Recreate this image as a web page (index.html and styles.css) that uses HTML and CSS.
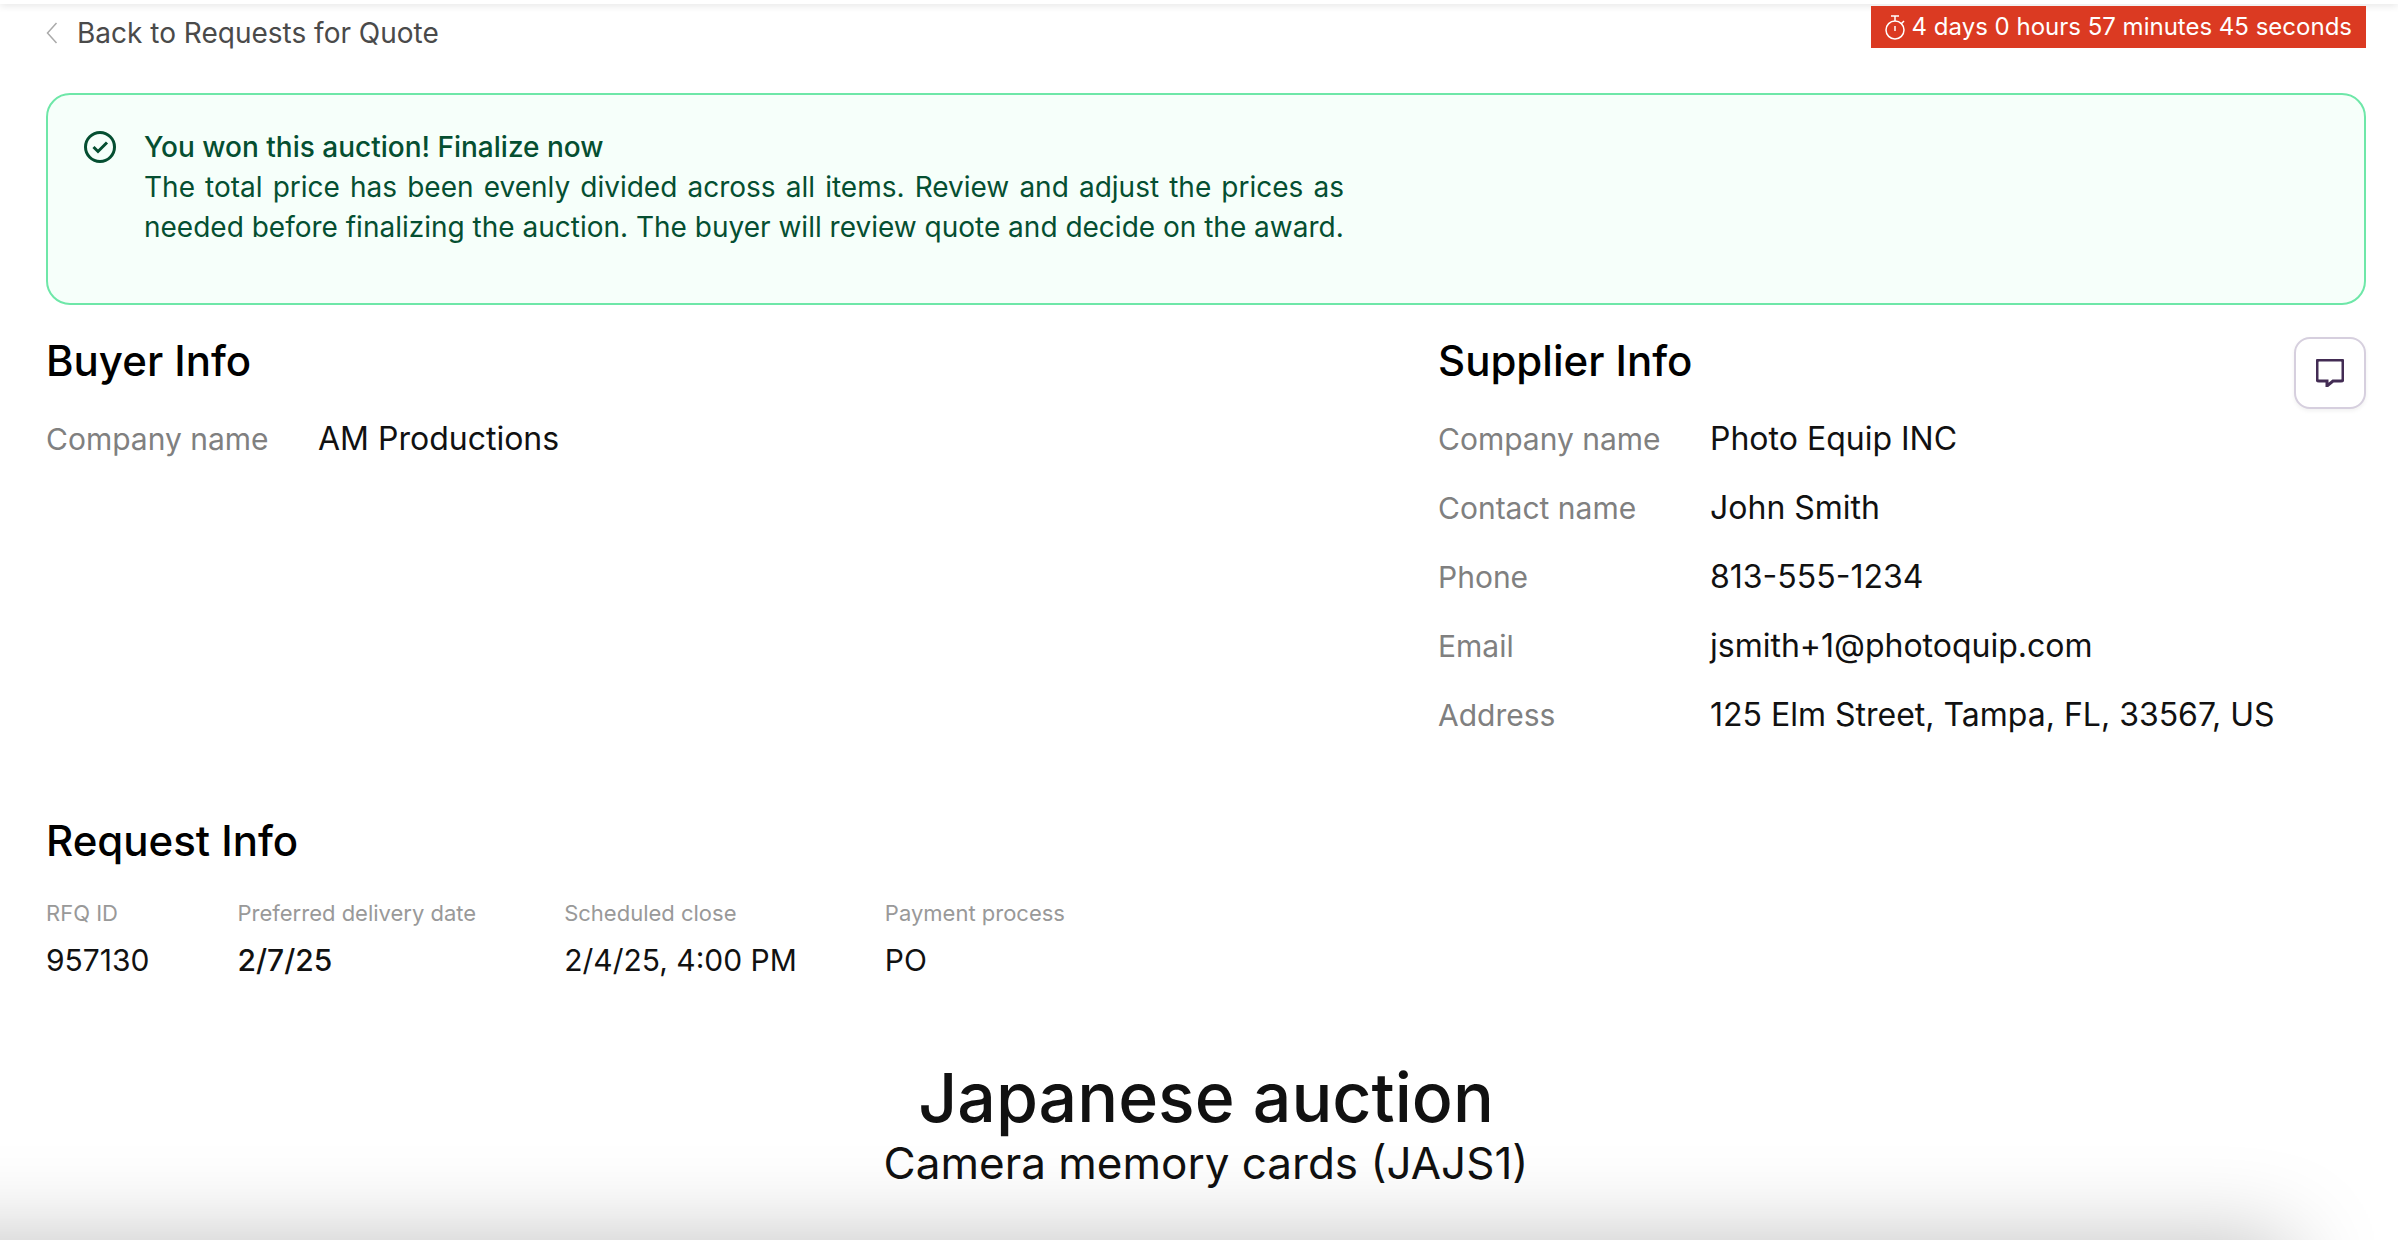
FILE: index.html
```
<!DOCTYPE html>
<html lang="en">
<head>
<meta charset="utf-8">
<meta name="viewport" content="width=device-width, initial-scale=1">
<title>Request for Quote</title>
<link rel="stylesheet" href="styles.css">
</head>
<body>
<header class="topbar"></header>
<main class="page">
  <div class="page-head">
    <a class="back" href="#">
      <svg class="back-icon" viewBox="0 0 12 22"><path d="M10.500 1L1.500 11l9 10"/></svg>
      Back to Requests for Quote
    </a>
    <div class="timer">
      <svg class="timer-icon" viewBox="0 0 20 25"><circle cx="10" cy="15" r="9"/><path d="M6 1h8M10 1v5M10 11v5M16 9l3-3"/></svg>
      4 days 0 hours 57 minutes 45 seconds
    </div>
  </div>

  <section class="alert">
    <svg class="alert-icon" viewBox="0 0 32 32"><circle cx="16" cy="16" r="14.5"/><path d="M9.500 16l4.500 4.500 9-9"/></svg>
    <div class="alert-body">
      <h2 class="alert-title">You won this auction! Finalize now</h2>
      <p class="alert-text">The total price has been evenly divided across all items. Review and adjust the prices as needed before finalizing the auction. The buyer will review quote and decide on the award.</p>
    </div>
  </section>

  <div class="parties">
    <section>
      <h2 class="heading">Buyer Info</h2>
      <dl class="info">
        <dt>Company name</dt><dd>AM Productions</dd>
      </dl>
    </section>
    <section class="supplier">
      <div>
        <h2 class="heading">Supplier Info</h2>
        <dl class="info">
          <dt>Company name</dt><dd>Photo Equip INC</dd>
          <dt>Contact name</dt><dd>John Smith</dd>
          <dt>Phone</dt><dd>813-555-1234</dd>
          <dt>Email</dt><dd>jsmith+1@photoquip.com</dd>
          <dt>Address</dt><dd>125 Elm Street, Tampa, FL, 33567, US</dd>
        </dl>
      </div>
      <button class="chat" type="button" aria-label="Open chat">
        <svg class="chat-icon" viewBox="0 0 28 28"><path d="M3 1h22a2 2 0 0 1 2 2v17a2 2 0 0 1-2 2h-8l-6 5v-5H3a2 2 0 0 1-2-2V3a2 2 0 0 1 2-2z"/></svg>
      </button>
    </section>
  </div>

  <section class="request">
    <h2 class="heading">Request Info</h2>
    <dl class="facts">
      <div><dt>RFQ ID</dt><dd>957130</dd></div>
      <div><dt>Preferred delivery date</dt><dd class="strong">2/7/25</dd></div>
      <div><dt>Scheduled close</dt><dd>2/4/25, 4:00 PM</dd></div>
      <div><dt>Payment process</dt><dd>PO</dd></div>
    </dl>
  </section>

  <div class="auction">
    <h1 class="auction-title">Japanese auction</h1>
    <p class="auction-name">Camera memory cards (JAJS1)</p>
  </div>
</main>
<footer class="bottom-bar"></footer>
</body>
</html>
```
FILE: styles.css
```
* {
  box-sizing: border-box;
  margin: 0;
}
body {
  background: #fff;
  color: #111;
  font-family: Inter, "Liberation Sans", sans-serif;
}
svg {
  fill: none;
  stroke: currentColor;
  flex: none;
}
.topbar {
  height: 4px;
  background: #fff;
  box-shadow: 0 0 8px rgba(0, 0, 0, 0.2);
}
.page {
  position: relative;
  padding: 2px 32px 32px 46px;
}
.page-head {
  display: flex;
  justify-content: space-between;
  align-items: flex-start;
}
.back {
  display: flex;
  align-items: center;
  gap: 19px;
  padding-top: 10px;
  color: #4a4a4a;
  font-size: 28px;
  line-height: 34px;
  text-decoration: none;
}
.back-icon {
  width: 12px;
  height: 22px;
  color: #aaa;
  stroke-width: 1.5;
}
.timer {
  display: flex;
  align-items: center;
  gap: 7px;
  padding: 0 14px;
  background: #db3a22;
  color: #fff;
  font-size: 24px;
  line-height: 42px;
}
.timer-icon {
  width: 20px;
  height: 25px;
  stroke-width: 1.5;
}

/* alert */
.alert {
  display: flex;
  gap: 28px;
  margin-top: 43px;
  padding: 32px 36px 56px;
  border: 2px solid #6ee7a8;
  border-radius: 24px;
  background: #f6fffa;
  color: #054f31;
  font-size: 28px;
  line-height: 40px;
}
.alert-icon {
  width: 32px;
  height: 32px;
  margin-top: 4px;
  stroke-width: 3;
}
.alert-body {
  max-width: 1200px;
}
.alert-title {
  font-size: 28px;
  font-weight: 500;
}
.alert-text {
  text-align: justify;
}

/* buyer and supplier */
.parties {
  display: grid;
  grid-template-columns: 3fr 2fr;
  margin-top: 32px;
}
.supplier {
  display: flex;
  justify-content: space-between;
  align-items: flex-start;
}
.heading {
  color: #000;
  font-size: 42px;
  font-weight: 500;
  line-height: 48px;
}
.info {
  display: grid;
  grid-template-columns: 248px auto;
  justify-content: start;
  gap: 29px 24px;
  margin-top: 34px;
  line-height: 40px;
}
.info dt {
  color: #808080;
  font-size: 30px;
}
.info dd {
  font-size: 32px;
}
.chat {
  display: flex;
  align-items: center;
  justify-content: center;
  width: 72px;
  height: 72px;
  padding: 0;
  border: 2px solid #d6cfde;
  border-radius: 16px;
  background: #fff;
  box-shadow: 0 2px 4px rgba(0, 0, 0, 0.06);
  color: #432c54;
}
.chat-icon {
  width: 28px;
  height: 28px;
  stroke-width: 3;
}

/* request */
.request {
  margin-top: 82px;
}
.facts {
  display: flex;
  gap: 88px;
  margin-top: 34px;
}
.facts dt {
  color: #999;
  font-size: 22px;
  line-height: 28px;
}
.facts dd {
  margin-top: 13px;
  font-size: 30px;
  line-height: 40px;
}
.facts .strong {
  font-weight: 500;
}

.auction {
  margin-top: 77px;
  text-align: center;
}
.auction-title {
  font-size: 68px;
  font-weight: 500;
  line-height: 80px;
}
.auction-name {
  font-size: 44px;
  line-height: 52px;
}

/* bar under the fold, only its shadow shows */
.bottom-bar {
  position: fixed;
  top: 100%;
  left: -120px;
  right: 108px;
  height: 200px;
  box-shadow: 0 0 90px rgba(0, 0, 0, 0.25);
}
```
